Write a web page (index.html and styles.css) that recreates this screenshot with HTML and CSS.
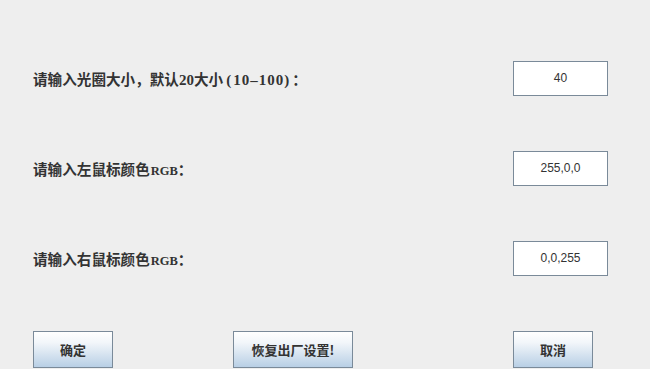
FILE: index.html
```html
<!DOCTYPE html>
<html>
<head>
<meta charset="utf-8">
<link rel="stylesheet" href="styles.css">
</head>
<body>
<div class="panel">
  <div class="row">
    <span class="label">请输入光圈大小，默认<span class="lat">20</span>大小<span class="paren open">(</span><span class="lat range">10–100</span><span class="paren close">)</span>：</span>
    <input class="field" type="text" value="40">
  </div>
  <div class="row">
    <span class="label">请输入左鼠标颜色<span class="lat small">RGB</span>：</span>
    <input class="field" type="text" value="255,0,0">
  </div>
  <div class="row">
    <span class="label">请输入右鼠标颜色<span class="lat small">RGB</span>：</span>
    <input class="field" type="text" value="0,0,255">
  </div>
  <div class="buttons">
    <button class="btn btn-small">确定</button>
    <button class="btn btn-wide">恢复出厂设置!</button>
    <button class="btn btn-small">取消</button>
  </div>
</div>
</body>
</html>
```
FILE: styles.css
```css
html, body {
  margin: 0;
  padding: 0;
  background: #eeeeee;
  width: 650px;
  height: 369px;
  overflow: hidden;
}
.panel {
  padding: 33px 42px 0 33px;
}
.row {
  height: 90px;
  display: flex;
  align-items: center;
  justify-content: space-between;
}
.label {
  font-family: "Noto Sans CJK SC", sans-serif;
  font-weight: bold;
  font-size: 14.6px;
  color: #333333;
}
.lat {
  font-family: "Liberation Serif", serif;
  font-size: 15px;
  font-weight: bold;
}
.lat.range {
  letter-spacing: 1px;
}
.lat.small {
  font-size: 12.5px;
  margin-left: 1px;
}
.paren {
  font-family: "Liberation Serif", serif;
  font-size: 15px;
  font-weight: bold;
}
.paren.open {
  margin-left: 3px;
  margin-right: 2px;
}
.paren.close {
  margin-left: 0;
  margin-right: 3px;
}
.field {
  box-sizing: border-box;
  width: 95px;
  height: 35px;
  margin: 0;
  padding: 0;
  border: 1px solid #7a8a99;
  background: #ffffff;
  font-family: "Liberation Sans", sans-serif;
  font-size: 12px;
  color: #333333;
  text-align: center;
  outline: none;
}
.buttons {
  margin-top: 28px;
  display: grid;
  grid-template-columns: 200px 280px 80px;
}
.btn {
  box-sizing: border-box;
  height: 37px;
  margin: 0;
  padding: 0;
  border: 1px solid #7a8a99;
  border-radius: 0;
  background: linear-gradient(to bottom, #ffffff 0%, #f2f6fa 30%, #b8cfe5 100%);
  font-family: "Noto Sans CJK SC", sans-serif;
  font-weight: bold;
  font-size: 13px;
  color: #333333;
}
.btn-small { width: 80px; }
.btn-wide { width: 120px; }
```
